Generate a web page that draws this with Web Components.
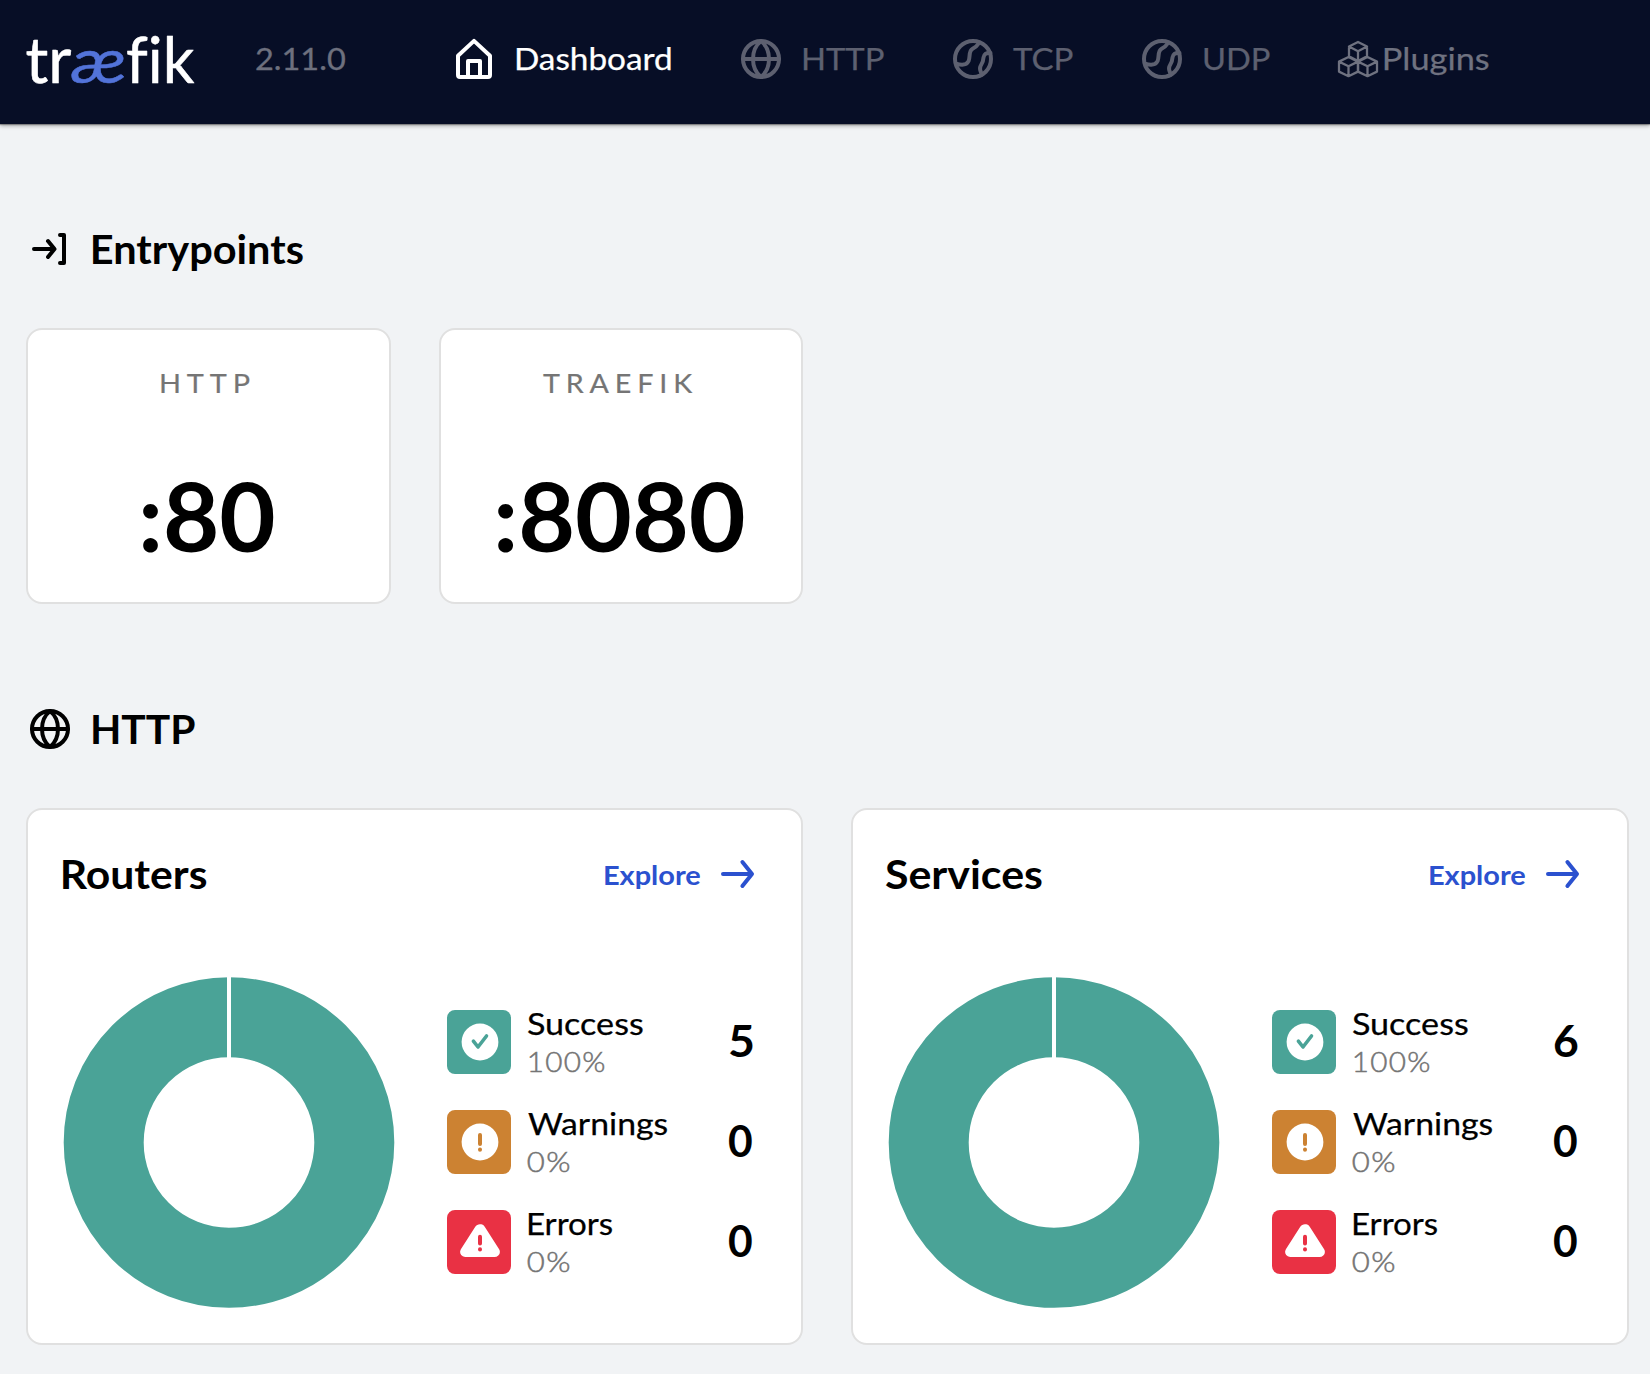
<!DOCTYPE html>
<html lang="en">
<head>
<meta charset="utf-8">
<title>Traefik</title>
<style>
  html, body { margin: 0; background: #f1f3f5; }
  body { font-family: Nunito, Lato, "Open Sans", sans-serif; color: #000; min-height: 1374px; overflow: hidden; }
</style>
</head>
<body>
<traefik-dashboard></traefik-dashboard>
<script>
const FAMILY = 'Lato, "Open Sans", sans-serif';

class Base extends HTMLElement {
  constructor() { super(); this.attachShadow({ mode: 'open' }); }
  connectedCallback() { this.shadowRoot.innerHTML = this.render(); }
  a(n, d = '') { return this.getAttribute(n) ?? d; }
}

/* One line of text whose visible glyphs span exactly `w` pixels. */
class FitText extends Base {
  render() {
    const size = +this.a('size', 32), weight = this.a('weight', '400'), ls = +this.a('ls', 0), w = +this.a('w');
    const text = this.a('text');
    const ctx = FitText.ctx ||= document.createElement('canvas').getContext('2d');
    ctx.font = `${weight} ${size}px ${FAMILY}`;
    const m = ctx.measureText(text);
    const ink = m.actualBoundingBoxLeft + m.actualBoundingBoxRight + ls * (text.length - 1);
    const k = w / ink;
    return `<style>
      :host { display: block; flex: none; width: ${w}px; height: ${Math.round(size * 1.2)}px; white-space: nowrap; }
      span { display: block; width: max-content; font: ${weight} ${size}px/${Math.round(size * 1.2)}px ${FAMILY};
        letter-spacing: ${ls}px; -webkit-text-stroke: ${this.a('stroke', '0')}px currentColor;
        transform-origin: 0 0; transform: translateX(${m.actualBoundingBoxLeft * k}px) scaleX(${k}); }
    </style><span>${text}</span>`;
  }
}

const ICONS = {
  home: `<path d="M4 16.8 20 1.9 36 16.8V36a2 2 0 0 1-2 2H6a2 2 0 0 1-2-2z"/><path d="M14 38V22h12v16"/>`,
  globe: `<circle cx="20" cy="20" r="18"/><path d="M2 20h36M20 2c-5 4-8 11-8 18s3 14 8 18M20 2c5 4 8 11 8 18s-3 14-8 18"/>`,
  ball: `<circle cx="20" cy="20" r="18"/><path d="M3 24.6C9.5 26.6 14 25.5 15.6 22c1.8-4.2-.2-10 4-12.2C23 8 24.5 6.5 26.4 3.5M37.500 14c-4.500-.6-6.600 1.200-7 4.600 0 4-1.600 6.400-3 8.600-1.600 3 .4 5.600 1.400 8.400"/>`,
  cubes: `<g stroke-width="2.3"><path d="M20 3l9 4.600v9.700l-9 4.700-9-4.700V7.600zM11 7.600l9 4.700 9-4.700M20 12.300V22"/>
    <path d="M10.500 18l9.500 4.600v10l-9.500 4.600-9.500-4.600v-10zM1 22.600l9.500 4.600 9.500-4.600M10.500 27.200v10"/>
    <path d="M29.500 18l9.500 4.600v10l-9.500 4.600-9.500-4.600v-10zM20 22.600l9.500 4.600 9.500-4.600M29.500 27.200v10"/></g>`,
  entry: `<path d="M4 20h20M18 12l6.500 8-6.500 8M30 6h4v28h-4"/>`,
  arrow: `<path d="M6 20h28M25.400 8l9.600 12-9.600 12"/>`,
  check: `<circle cx="20" cy="20" r="18.400" fill="#fff" stroke="none"/><path d="M13.400 19.200l4.600 5.800 8.500-11" stroke-width="3.600"/>`,
  warn: `<circle cx="20" cy="20" r="18.400" fill="#fff" stroke="none"/><path d="M20 13v9M20 27.600v.1" stroke-width="4"/>`,
  error: `<path d="M20 5.500 5.600 29.800H34.400z" fill="#fff" stroke="#fff" stroke-width="11" transform="translate(0 2.200) scale(1 .93)"/><path d="M20 14.800v6.600M20 27.300v.1" stroke-width="4"/>`
};
class UiIcon extends Base {
  render() {
    return `<style>:host{display:block;flex:none;width:40px;height:40px}svg{display:block;overflow:visible}</style>
      <svg width="40" height="40" viewBox="0 0 40 40" fill="none" stroke="currentColor" stroke-width="4" stroke-linecap="round" stroke-linejoin="round">${ICONS[this.a('name')]}</svg>`;
  }
}

class TraefikLogo extends Base {
  render() {
    return `<style>:host{display:block;flex:none;width:168px;height:60px}svg{display:block;overflow:visible}
      text{font:400 63px ${FAMILY};fill:#fff;stroke:#fff;stroke-width:.5px;stroke-linejoin:round;font-variant-ligatures:none}
      .ae{font-style:italic;fill:#5273d9;stroke:#5273d9}</style>
      <svg width="168" height="60" viewBox="26 28 168 60">
        <text x="25.5" y="83" textLength="46" lengthAdjust="spacingAndGlyphs">tr</text>
        <text class="ae" x="71" y="83" textLength="56" lengthAdjust="spacingAndGlyphs">æ</text>
        <text x="126" y="83" textLength="68.5" lengthAdjust="spacingAndGlyphs">fik</text>
      </svg>`;
  }
}

class NavItem extends Base {
  render() {
    return `<style>:host{display:flex;align-items:center;flex:none;gap:${this.a('gap')}px;margin-left:${this.a('lead')}px;color:${this.a('color')}}
      ui-icon{margin-top:2px}</style>
      <ui-icon name="${this.a('icon')}"></ui-icon>
      <fit-text text="${this.a('label')}" w="${this.a('w')}" size="31.5" stroke=".25"></fit-text>`;
  }
}

class AppHeader extends Base {
  render() {
    return `<style>:host{display:block;position:relative;box-shadow:0 1px 1px rgba(0,0,0,.3),0 2px 4px rgba(0,0,0,.3)}
      header{height:124px;box-sizing:border-box;padding:0 0 8px 26px;background:#070e26;display:flex;align-items:center}
      .v{margin-left:61.500px;color:#6d707e}</style>
      <header><traefik-logo></traefik-logo>
      <fit-text class="v" text="2.11.0" w="89.5" size="31.5" stroke=".3"></fit-text>
      <nav-item icon="home" label="Dashboard" w="155" gap="22" lead="109" color="#fff"></nav-item>
      <nav-item icon="globe" label="HTTP" w="80.5" gap="22" lead="70" color="#5d6070"></nav-item>
      <nav-item icon="ball" label="TCP" w="59.5" gap="20" lead="69.5" color="#5d6070"></nav-item>
      <nav-item icon="ball" label="UDP" w="65.5" gap="22" lead="69" color="#5d6070"></nav-item>
      <nav-item icon="cubes" label="Plugins" w="105" gap="6" lead="68.5" color="#6f7280"></nav-item>
      </header>`;
  }
}

class SectionHeading extends Base {
  render() {
    return `<style>:host{display:flex;align-items:center;height:48px;margin:101px 0 55px;padding-left:4px;gap:22.500px}
      fit-text{margin-top:-1px}</style>
      <ui-icon name="${this.a('icon')}"></ui-icon><fit-text text="${this.a('label')}" w="${this.a('w')}" size="39.5" weight="700"></fit-text>`;
  }
}

class UiCard extends Base {
  render() {
    return `<style>:host{display:block;box-sizing:border-box;border:2px solid #e0e0e0;border-radius:16px;background:#fff}</style><slot></slot>`;
  }
}

class EntryPoint extends Base {
  render() {
    return `<style>:host{display:block}ui-card{height:276px}
      div{display:flex;flex-direction:column;align-items:center;padding-top:36px;gap:58px}
      .l{color:#757575;margin-right:6px}</style>
      <ui-card><div><fit-text class="l" text="${this.a('label')}" w="${this.a('lw')}" size="27.5" ls="5.6" stroke=".2"></fit-text>
      <fit-text text="${this.a('port')}" w="${this.a('pw')}" size="96" weight="700"></fit-text></div></ui-card>`;
  }
}

class DonutChart extends Base {
  render() {
    return `<style>:host{display:block;flex:none;width:332px;height:331px}svg{display:block}</style>
      <svg width="332" height="331" viewBox="-166 -165.500 332 331"><circle r="125.300" fill="none" stroke="#4aa397" stroke-width="80"/>
      <path d="M0-166V-80" stroke="#fff" stroke-width="4"/></svg>`;
  }
}

class StatusRow extends Base {
  render() {
    const pct = this.a('pct');
    return `<style>:host{display:flex;align-items:center;height:64px}
      .b{width:64px;height:64px;border-radius:8px;background:${this.a('color')};color:${this.a('color')};display:flex;align-items:center;justify-content:center;flex:none}
      .t{margin:-3px 0 0 17px}.b ui-icon{margin-left:1px}
      .p{color:#757575;margin:3px 0 0 ${pct === '100%' ? 1 : 0}px}
      .n{margin:-4px 0 0 auto}</style>
      <div class="b"><ui-icon name="${this.a('icon')}"></ui-icon></div>
      <div class="t"><fit-text text="${this.a('label')}" w="${this.a('w')}" size="31.5" stroke=".25"></fit-text>
      <fit-text class="p" text="${pct}" w="${pct === '100%' ? 76 : 42}" size="27.5" ls="1.2" weight="300" stroke=".5"></fit-text></div>
      <fit-text class="n" text="${this.a('n')}" w="23.500" size="43.5" weight="700"></fit-text>`;
  }
}

class StatCard extends Base {
  render() {
    return `<style>:host{display:block}ui-card{height:537px}
      header{height:128px;display:flex;align-items:center;padding:0 ${this.a('end')}px 0 ${this.a('inset')}px}
      header fit-text{margin-top:-1px}
      .e{display:flex;align-items:center;color:#2b51cf;margin-left:auto}
      .e fit-text{margin:1px 17px 0 0}
      main{display:flex;align-items:center;padding:38.500px ${+this.a('end') + 5}px 0 35px}
      .list{display:flex;flex-direction:column;gap:36px;flex:1;margin-left:52px}</style>
      <ui-card><header><fit-text text="${this.a('label')}" w="${this.a('w')}" size="39.5" weight="700"></fit-text>
      <div class="e"><fit-text text="Explore" w="95" size="27.5" weight="700"></fit-text><ui-icon name="arrow"></ui-icon></div></header>
      <main><donut-chart></donut-chart><div class="list">
      <status-row icon="check" color="#4aa397" label="Success" w="115" pct="100%" n="${this.a('n')}"></status-row>
      <status-row icon="warn" color="#cc8232" label="Warnings" w="139.5" pct="0%" n="0"></status-row>
      <status-row icon="error" color="#e93144" label="Errors" w="84.5" pct="0%" n="0"></status-row>
      </div></main></ui-card>`;
  }
}

class TraefikDashboard extends Base {
  render() {
    return `<style>:host{display:block}.page{padding:0 21px 0 26px;display:flow-root}
      .small{display:grid;grid-template-columns:365px 364px;gap:48px}
      .large{display:grid;grid-template-columns:777px 778px;gap:48px}</style>
      <app-header></app-header>
      <div class="page">
      <section-heading icon="entry" label="Entrypoints" w="210.5"></section-heading>
      <div class="small"><entry-point label="HTTP" lw="88.5" port=":80" pw="131"></entry-point>
      <entry-point label="TRAEFIK" lw="150" port=":8080" pw="246"></entry-point></div>
      <section-heading icon="globe" label="HTTP" w="102"></section-heading>
      <div class="large"><stat-card label="Routers" w="144" inset="34.5" end="44" n="5"></stat-card>
      <stat-card label="Services" w="157.5" inset="32" end="45" n="6"></stat-card></div></div>`;
  }
}

customElements.define('fit-text', FitText);
customElements.define('ui-icon', UiIcon);
customElements.define('traefik-logo', TraefikLogo);
customElements.define('nav-item', NavItem);
customElements.define('app-header', AppHeader);
customElements.define('section-heading', SectionHeading);
customElements.define('ui-card', UiCard);
customElements.define('entry-point', EntryPoint);
customElements.define('donut-chart', DonutChart);
customElements.define('status-row', StatusRow);
customElements.define('stat-card', StatCard);
customElements.define('traefik-dashboard', TraefikDashboard);
</script>
</body>
</html>
